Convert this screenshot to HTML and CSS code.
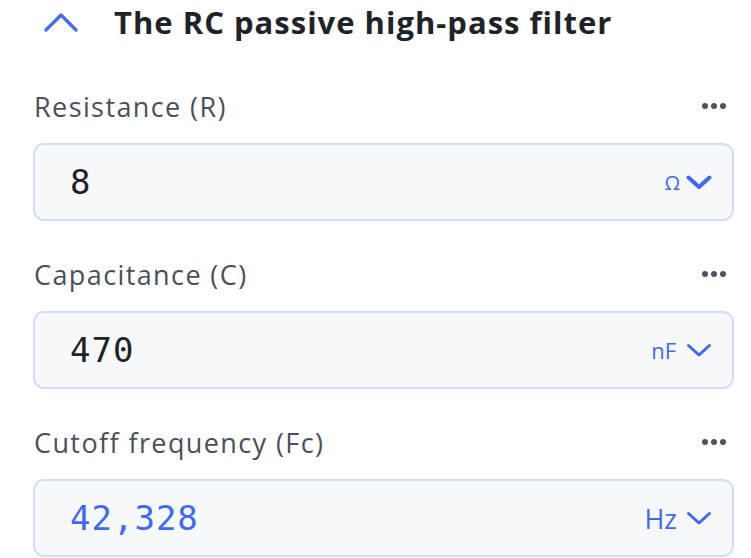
FILE: index.html
```html
<!DOCTYPE html>
<html lang="en">
<head>
  <meta charset="UTF-8">
  <title>RC high-pass filter</title>
  <link rel="stylesheet" href="styles.css">
</head>
<body>
  <div class="header">
    <svg class="toggle" width="34" height="19" viewBox="0 0 34 19">
      <path d="M2 17 L17 2 L32 17" fill="none" stroke="#3f6cf4" stroke-width="3.2" stroke-linecap="round" stroke-linejoin="round"/>
    </svg>
    <h1>The RC passive high-pass filter</h1>
  </div>

  <div class="field first">
    <div class="label-row">
      <span class="label">Resistance (R)</span>
      <span class="more"><i></i><i></i><i></i></span>
    </div>
    <div class="box">
      <span class="value">8</span>
      <span class="unit omega">Ω</span>
      <svg class="caret bold" width="26" height="15" viewBox="0 0 26 15"><path d="M2.5 2.5 L13 12 L23.5 2.5"/></svg>
    </div>
  </div>

  <div class="field">
    <div class="label-row">
      <span class="label">Capacitance (C)</span>
      <span class="more"><i></i><i></i><i></i></span>
    </div>
    <div class="box">
      <span class="value">470</span>
      <span class="unit">nF</span>
      <svg class="caret" width="26" height="15" viewBox="0 0 26 15"><path d="M2.5 2.5 L13 12 L23.5 2.5"/></svg>
    </div>
  </div>

  <div class="field">
    <div class="label-row">
      <span class="label">Cutoff frequency (Fc)</span>
      <span class="more"><i></i><i></i><i></i></span>
    </div>
    <div class="box">
      <span class="value result">42,328</span>
      <span class="unit big">Hz</span>
      <svg class="caret" width="26" height="15" viewBox="0 0 26 15"><path d="M2.5 2.5 L13 12 L23.5 2.5"/></svg>
    </div>
  </div>
</body>
</html>
```

FILE: styles.css
```css
body {
  margin: 0;
  background: #fff;
  font-family: "Open Sans", "Noto Sans", sans-serif;
  color: #1f2328;
}
.header {
  display: flex;
  align-items: center;
  height: 44px;
  padding-left: 44px;
}
.toggle {
  flex: none;
}
h1 {
  margin: 0 0 0 36px;
  font-size: 31px;
  font-weight: 700;
  color: #1f2328;
  letter-spacing: 1px;
}
.field {
  margin: 35px 17px 0 33px;
}
.field.first {
  margin-top: 44px;
}
.label-row {
  display: flex;
  justify-content: space-between;
  align-items: center;
  height: 36px;
  margin-bottom: 19px;
}
.label {
  font-size: 27px;
  letter-spacing: 1.4px;
  color: #4a505b;
  padding-left: 1px;
}
.more {
  display: flex;
  gap: 3px;
  margin-right: 8px;
}
.more i {
  width: 6px;
  height: 6px;
  border-radius: 50%;
  background: #4b5260;
}
.box {
  display: flex;
  align-items: center;
  height: 74px;
  border: 2px solid #d3defd;
  border-radius: 11px;
  background: #f7f8fa;
  padding: 0 20px 0 35px;
}
.value {
  flex: 1;
  font-family: "DejaVu Sans Mono", monospace;
  font-size: 34px;
  letter-spacing: 1px;
  font-variant-numeric: slashed-zero;
  color: #1f2328;
}
.value.result {
  color: #3d6af3;
}
.unit {
  color: #3d6af3;
  font-size: 22px;
  margin-right: 10px;
}
.unit.omega {
  font-size: 20px;
  margin-right: 6px;
}
.unit.big {
  font-size: 27px;
  margin-right: 9px;
}
.caret path {
  fill: none;
  stroke: #3d6af3;
  stroke-width: 3;
  stroke-linecap: round;
  stroke-linejoin: round;
}
.caret.bold path {
  stroke-width: 4;
}
```
